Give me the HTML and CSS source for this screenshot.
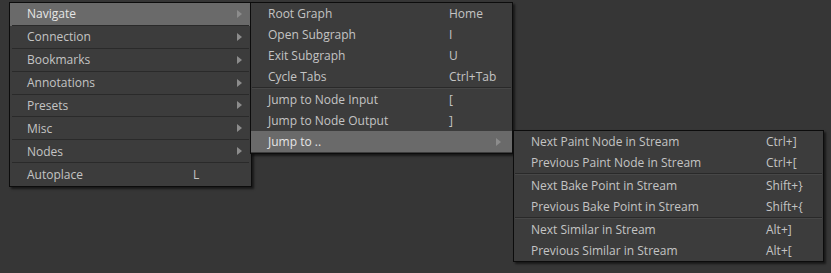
FILE: index.html
```html
<!DOCTYPE html>
<html>
<head>
<meta charset="utf-8">
<link rel="stylesheet" href="styles.css">
</head>
<body>
<div class="canvas">
  <div class="menu menu-main">
    <div class="item sep active"><span class="label">Navigate</span><span class="key"></span><span class="arrow"></span></div>
    <div class="item sep"><span class="label">Connection</span><span class="key"></span><span class="arrow"></span></div>
    <div class="item sep"><span class="label">Bookmarks</span><span class="key"></span><span class="arrow"></span></div>
    <div class="item sep"><span class="label">Annotations</span><span class="key"></span><span class="arrow"></span></div>
    <div class="item sep"><span class="label">Presets</span><span class="key"></span><span class="arrow"></span></div>
    <div class="item sep"><span class="label">Misc</span><span class="key"></span><span class="arrow"></span></div>
    <div class="item sep"><span class="label">Nodes</span><span class="key"></span><span class="arrow"></span></div>
    <div class="item"><span class="label">Autoplace</span><span class="key">L</span><span class="noarrow"></span></div>
  </div>

  <div class="menu menu-nav">
    <div class="row"><span class="label">Root Graph</span><span class="key">Home</span></div>
    <div class="row"><span class="label">Open Subgraph</span><span class="key">I</span></div>
    <div class="row"><span class="label">Exit Subgraph</span><span class="key">U</span></div>
    <div class="row"><span class="label">Cycle Tabs</span><span class="key">Ctrl+Tab</span></div>
    <div class="divider"></div>
    <div class="row"><span class="label">Jump to Node Input</span><span class="key">[</span></div>
    <div class="row"><span class="label">Jump to Node Output</span><span class="key">]</span></div>
    <div class="row active"><span class="label">Jump to ..</span><span class="key"></span><span class="arrow"></span></div>
  </div>

  <div class="menu menu-jump">
    <div class="row"><span class="label">Next Paint Node in Stream</span><span class="key">Ctrl+]</span></div>
    <div class="row"><span class="label">Previous Paint Node in Stream</span><span class="key">Ctrl+[</span></div>
    <div class="divider"></div>
    <div class="row"><span class="label">Next Bake Point in Stream</span><span class="key">Shift+}</span></div>
    <div class="row"><span class="label">Previous Bake Point in Stream</span><span class="key">Shift+{</span></div>
    <div class="divider"></div>
    <div class="row"><span class="label">Next Similar in Stream</span><span class="key">Alt+]</span></div>
    <div class="row"><span class="label">Previous Similar in Stream</span><span class="key">Alt+[</span></div>
  </div>
</div>
</body>
</html>
```

FILE: styles.css
```css
html, body {
  margin: 0;
  padding: 0;
}
body {
  background: #363636;
  width: 831px;
  height: 273px;
  overflow: hidden;
  font-family: "Open Sans", "DejaVu Sans", sans-serif;
  font-size: 12px;
  color: #c4c4c4;
}
.canvas {
  position: relative;
  width: 831px;
  height: 273px;
}
.menu {
  position: absolute;
  box-sizing: border-box;
  background: #3c3c3c;
  border: 1px solid #0c0c0c;
  box-shadow: 2px 2px 2px rgba(0, 0, 0, 0.55);
  display: flex;
  flex-direction: column;
}
.menu-main {
  left: 9px;
  top: 2px;
  width: 243px;
  height: 185px;
}
.menu-nav {
  left: 250px;
  top: 2px;
  width: 263px;
  height: 152px;
}
.menu-jump {
  left: 513px;
  top: 130px;
  width: 311px;
  height: 132px;
}
.item {
  position: relative;
  height: 23px;
  display: flex;
  align-items: center;
  padding: 0 9px 1px 17px;
  box-sizing: border-box;
}
.item.sep::after {
  content: "";
  position: absolute;
  left: 2px;
  right: 2px;
  bottom: 0;
  height: 1px;
  background: #2a2a2a;
}
.item .label {
  flex: 0 0 166px;
}
.item .key {
  flex: 1;
}
.active {
  background: #6a6a6a;
  color: #e6e6e6;
}
.arrow {
  width: 0;
  height: 0;
  border-top: 4px solid transparent;
  border-bottom: 4px solid transparent;
  border-left: 5px solid #8c8c8c;
}
.noarrow {
  width: 5px;
}
.row {
  height: 21px;
  display: flex;
  align-items: center;
  padding: 0 11px 0 17px;
  box-sizing: border-box;
}
.menu-nav .row .label {
  flex: 0 0 181px;
}
.menu-jump .row .label {
  flex: 0 0 235px;
}
.row .key {
  flex: 1;
}
.divider {
  height: 1px;
  margin: 0 1px;
  background: #292929;
  border-bottom: 1px solid #474747;
}
```
